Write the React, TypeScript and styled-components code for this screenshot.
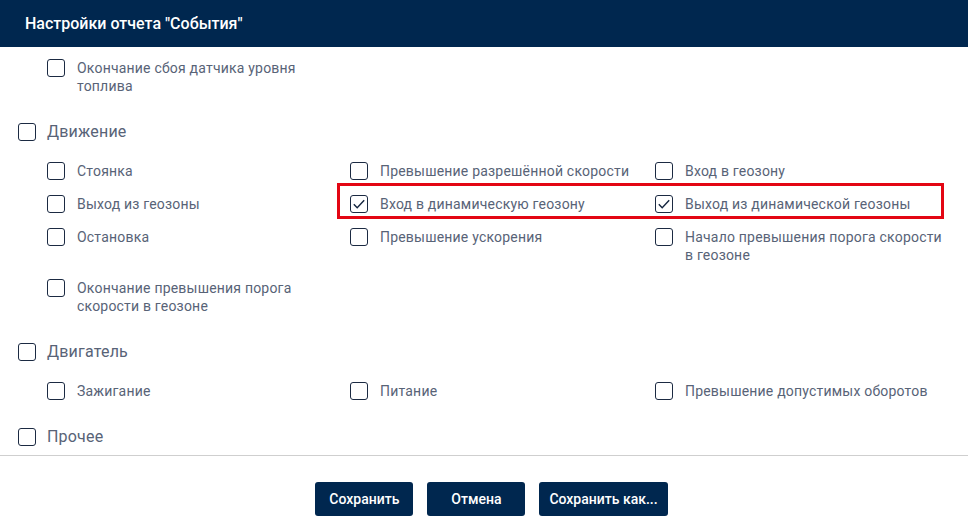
import { createGlobalStyle } from 'styled-components';
import styled from 'styled-components';

const GlobalStyles = createGlobalStyle`
  html, body {
    margin: 0;
    padding: 0;
    background: #ffffff;
  }
  body {
    font-family: Roboto, 'Noto Sans', 'Liberation Sans', sans-serif;
  }
`;

type Item = { label: string; checked?: boolean };

const sensorsTail: Item[] = [{ label: 'Окончание сбоя датчика уровня топлива' }];

const movement: Item[] = [
  { label: 'Стоянка' },
  { label: 'Превышение разрешённой скорости' },
  { label: 'Вход в геозону' },
  { label: 'Выход из геозоны' },
  { label: 'Вход в динамическую геозону', checked: true },
  { label: 'Выход из динамической геозоны', checked: true },
  { label: 'Остановка' },
  { label: 'Превышение ускорения' },
  { label: 'Начало превышения порога скорости в геозоне' },
  { label: 'Окончание превышения порога скорости в геозоне' },
];

const engine: Item[] = [
  { label: 'Зажигание' },
  { label: 'Питание' },
  { label: 'Превышение допустимых оборотов' },
];

function Check({ checked }: { checked?: boolean }) {
  return (
    <Box>
      {checked && (
        <svg width="14" height="14" viewBox="0 0 14 14">
          <polyline points="1.8,7.2 5.2,10.8 12.2,3.2" fill="none" stroke="#14253f" strokeWidth="1.4" />
        </svg>
      )}
    </Box>
  );
}

function SubList({ items, marked }: { items: Item[]; marked?: boolean }) {
  return (
    <SubGrid>
      {items.map((it) => (
        <SubItem key={it.label}>
          <Check checked={it.checked} />
          <span>{it.label}</span>
        </SubItem>
      ))}
      {marked && <Marker />}
    </SubGrid>
  );
}

function Group({ title, items, marked }: { title: string; items?: Item[]; marked?: boolean }) {
  return (
    <Section>
      <GroupHead>
        <Check />
        <span>{title}</span>
      </GroupHead>
      {items && <SubList items={items} marked={marked} />}
    </Section>
  );
}

export default function App() {
  return (
    <>
      <GlobalStyles />
      <Dialog>
        <Header>Настройки отчета "События"</Header>
        <Body>
          <SubList items={sensorsTail} />
          <Group title="Движение" items={movement} marked />
          <Group title="Двигатель" items={engine} />
          <Group title="Прочее" />
        </Body>
        <Footer>
          <Button>Сохранить</Button>
          <Button>Отмена</Button>
          <Button>Сохранить как...</Button>
        </Footer>
      </Dialog>
    </>
  );
}

const Dialog = styled.div`
  width: 968px;
  height: 523px;
  display: flex;
  flex-direction: column;
  overflow: hidden;
`;

const Header = styled.div`
  height: 47px;
  flex-shrink: 0;
  background: #00274f;
  color: #ffffff;
  font-size: 16px;
  font-weight: 500;
  display: flex;
  align-items: center;
  padding-left: 25px;
  padding-bottom: 1px;
  box-sizing: border-box;
`;

const Body = styled.div`
  height: 408px;
  flex-shrink: 0;
  overflow: hidden;
  padding: 12px 18px 0 18px;
  box-sizing: border-box;
  display: flex;
  flex-direction: column;
  gap: 27px;
`;

const Section = styled.div`
  display: flex;
  flex-direction: column;
  gap: 20px;
`;

const Box = styled.div`
  width: 18px;
  height: 18px;
  box-sizing: border-box;
  border: 1.5px solid #1b2a42;
  border-radius: 3px;
  flex-shrink: 0;
  display: flex;
  align-items: center;
  justify-content: center;
`;

const GroupHead = styled.div`
  display: flex;
  align-items: center;
  gap: 11px;
  font-size: 16px;
  line-height: 20px;
  letter-spacing: 0.2px;
  color: #586377;
`;

const SubGrid = styled.div`
  position: relative;
  margin-left: 29px;
  display: grid;
  grid-template-columns: 303px 305px 1fr;
  row-gap: 15px;
`;

const SubItem = styled.div`
  display: flex;
  align-items: flex-start;
  gap: 12px;
  font-size: 14px;
  line-height: 18px;
  letter-spacing: 0.2px;
  color: #586377;
  padding-right: 6px;
`;

const Marker = styled.div`
  position: absolute;
  left: 290px;
  top: 21px;
  width: 607px;
  height: 36px;
  box-sizing: border-box;
  border: 3px solid #e30613;
  pointer-events: none;
`;

const Footer = styled.div`
  flex: 1;
  border-top: 1px solid #cfcfcf;
  display: flex;
  justify-content: center;
  align-items: flex-start;
  gap: 14px;
  padding: 26px 0 0 15px;
`;

const Button = styled.button`
  height: 34px;
  padding: 0 10px;
  min-width: 98px;
  border: none;
  border-radius: 3px;
  background: #00274f;
  color: #ffffff;
  font-family: Roboto, 'Noto Sans', sans-serif;
  font-size: 14px;
  font-weight: 500;
  cursor: pointer;
`;
